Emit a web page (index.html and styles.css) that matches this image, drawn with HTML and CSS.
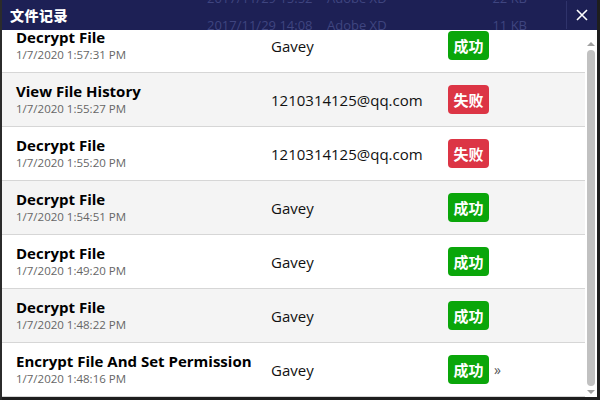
FILE: index.html
```html
<!DOCTYPE html>
<html lang="zh-CN">
<head>
    <meta charset="UTF-8">
    <title>文件记录</title>
    <link rel="stylesheet" href="styles.css">
</head>
<body>
    <div class="window">
        <div class="titlebar">
            <div class="ghost">
                <div class="ghost-row"><span class="g-date">2017/11/29 15:52</span><span class="g-app">Adobe XD</span><span class="g-size">22 KB</span></div>
                <div class="ghost-row"><span class="g-date">2017/11/29 14:08</span><span class="g-app">Adobe XD</span><span class="g-size">11 KB</span></div>
            </div>
            <span class="title">文件记录</span>
            <span class="divider"></span>
            <button class="close" title="关闭">
                <svg width="12" height="12" viewBox="0 0 12 12"><path d="M1 1 L11 11 M11 1 L1 11" stroke="#fff" stroke-width="1.6" fill="none"/></svg>
            </button>
        </div>

        <div class="body">
            <div class="list">
                <div class="row">
                    <div class="info"><div class="name">Decrypt File</div><div class="time">1/7/2020 1:57:31 PM</div></div>
                    <div class="user">Gavey</div>
                    <div class="state"><span class="badge ok">成功</span></div>
                </div>
                <div class="row">
                    <div class="info"><div class="name">View File History</div><div class="time">1/7/2020 1:55:27 PM</div></div>
                    <div class="user">1210314125@qq.com</div>
                    <div class="state"><span class="badge fail">失败</span></div>
                </div>
                <div class="row">
                    <div class="info"><div class="name">Decrypt File</div><div class="time">1/7/2020 1:55:20 PM</div></div>
                    <div class="user">1210314125@qq.com</div>
                    <div class="state"><span class="badge fail">失败</span></div>
                </div>
                <div class="row">
                    <div class="info"><div class="name">Decrypt File</div><div class="time">1/7/2020 1:54:51 PM</div></div>
                    <div class="user">Gavey</div>
                    <div class="state"><span class="badge ok">成功</span></div>
                </div>
                <div class="row">
                    <div class="info"><div class="name">Decrypt File</div><div class="time">1/7/2020 1:49:20 PM</div></div>
                    <div class="user">Gavey</div>
                    <div class="state"><span class="badge ok">成功</span></div>
                </div>
                <div class="row">
                    <div class="info"><div class="name">Decrypt File</div><div class="time">1/7/2020 1:48:22 PM</div></div>
                    <div class="user">Gavey</div>
                    <div class="state"><span class="badge ok">成功</span></div>
                </div>
                <div class="row">
                    <div class="info"><div class="name">Encrypt File And Set Permission</div><div class="time">1/7/2020 1:48:16 PM</div></div>
                    <div class="user">Gavey</div>
                    <div class="state"><span class="badge ok">成功</span><span class="more">»</span></div>
                </div>
            </div>

            <div class="scrollbar">
                <span class="arrow up"></span>
                <div class="track"><div class="thumb"></div></div>
                <span class="arrow down"></span>
            </div>
        </div>
        <div class="under"></div>
    </div>
</body>
</html>
```

FILE: styles.css
```css
* {
    margin: 0;
    padding: 0;
    box-sizing: border-box;
}

body {
    width: 600px;
    height: 400px;
    overflow: hidden;
    background: #2a2a2a;
    font-family: "Open Sans", "Noto Sans CJK SC", sans-serif;
}

.window {
    width: 600px;
    height: 400px;
    display: flex;
    flex-direction: column;
    background: #1d2055;
    border-left: 2px solid #2b2b2b;
    border-right: 3px solid #1e1e1e;
}

.titlebar {
    position: relative;
    height: 30px;
    display: flex;
    align-items: center;
    background: #1d2055;
    padding-left: 8px;
    flex-shrink: 0;
    overflow: hidden;
}

/* faded rows of the window underneath, showing through the title bar */
.ghost {
    position: absolute;
    left: 205px;
    top: -15px;
    color: #3f4580;
    font-size: 13px;
    line-height: 27px;
}

.ghost-row {
    display: flex;
}

.g-date { width: 120px; }
.g-app { width: 150px; }
.g-size { width: 50px; text-align: right; }

.title {
    position: relative;
    color: #fff;
    font-weight: 900;
    font-size: 14px;
    font-family: "Noto Sans CJK SC", sans-serif;
    letter-spacing: 0.5px;
}

.divider {
    margin-left: auto;
    width: 1px;
    height: 28px;
    background: #2f336b;
}

.close {
    width: 30px;
    height: 30px;
    display: flex;
    align-items: center;
    justify-content: center;
    background: none;
    border: none;
}

.body {
    flex: 1;
    display: flex;
    background: #fff;
    overflow: hidden;
}

.list {
    flex: 1;
    margin-top: -11px;
}

.row {
    height: 54px;
    display: flex;
    align-items: center;
    border-bottom: 1px solid #d6d6d6;
    background: #fff;
}

.row:nth-child(even) {
    background: #f4f4f4;
}

.info {
    width: 269px;
    padding-left: 14px;
    padding-bottom: 2px;
}

.name {
    font-weight: bold;
    font-size: 15px;
    line-height: 20px;
    color: #000;
}

.time {
    font-size: 11.5px;
    line-height: 16px;
    color: #666;
}

.user {
    width: 177px;
    font-size: 15px;
    color: #111;
}

.state {
    display: flex;
    align-items: center;
}

.badge {
    display: inline-block;
    width: 41px;
    height: 29px;
    line-height: 29px;
    text-align: center;
    border-radius: 4px;
    color: #fff;
    font-weight: bold;
    font-size: 15px;
    font-family: "Noto Sans CJK SC", sans-serif;
}

.ok { background: #0aa60a; }
.fail { background: #dc3545; }

.more {
    margin-left: 5px;
    font-size: 14px;
    color: #555;
}

.scrollbar {
    width: 12px;
    display: flex;
    flex-direction: column;
    align-items: center;
    padding: 12px 0 3px;
    background: #fff;
}

.arrow {
    width: 0;
    height: 0;
    border-left: 4px solid transparent;
    border-right: 4px solid transparent;
}

.arrow.up { border-bottom: 4px solid #a0a0a0; }
.arrow.down { border-top: 4px solid #a0a0a0; }

.track {
    flex: 1;
    width: 8px;
    padding: 4px 0;
}

.thumb {
    height: 100%;
    background: #c1c1c1;
    border-radius: 4px;
}

.under {
    height: 3px;
    background: #1e1e1e;
    flex-shrink: 0;
}
```
